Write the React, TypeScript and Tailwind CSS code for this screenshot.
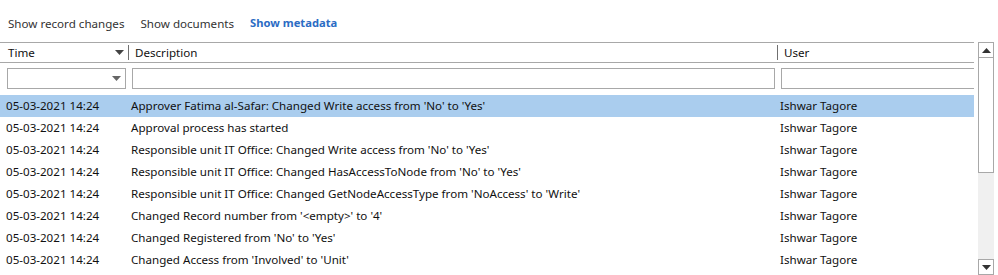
import { useState } from "react";

const rows = [
  "Approver Fatima al-Safar: Changed Write access from 'No' to 'Yes'",
  "Approval process has started",
  "Responsible unit IT Office: Changed Write access from 'No' to 'Yes'",
  "Responsible unit IT Office: Changed HasAccessToNode from 'No' to 'Yes'",
  "Responsible unit IT Office: Changed GetNodeAccessType from 'NoAccess' to 'Write'",
  "Changed Record number from '<empty>' to '4'",
  "Changed Registered from 'No' to 'Yes'",
  "Changed Access from 'Involved' to 'Unit'",
];

function Caret({ up = false, className = "" }: { up?: boolean; className?: string }) {
  return (
    <svg width="9" height="5" viewBox="0 0 9 5" className={className}>
      <path d={up ? "M0 5 L4.5 0 L9 5 Z" : "M0 0 L9 0 L4.5 5 Z"} fill="currentColor" />
    </svg>
  );
}

export default function App() {
  const [tab, setTab] = useState(2);
  const tabs = ["Show record changes", "Show documents", "Show metadata"];

  return (
    <div className="relative h-[275px] w-[998px] overflow-hidden bg-white text-[11.6px] text-[#111]" style={{ fontFamily: "'Noto Sans', sans-serif" }}>
      <div className="flex h-[42px] items-center gap-[16px] pl-[8px] pt-[5px]">
        {tabs.map((t, i) => (
          <button key={t} onClick={() => setTab(i)} className={i === tab ? "text-[11.2px] font-bold text-[#2b6cc4]" : "text-[#333]"}>{t}</button>
        ))}
      </div>

      <div className="flex">
        <div className="w-[974px]">
          {/* header */}
          <div className="flex h-[21px] items-center border-y border-[#a8a8a8]">
            <div className="flex w-[128px] items-center justify-between pl-[8px] pr-[4px]">
              <span>Time</span>
              <Caret className="text-[#444]" />
            </div>
            <div className="h-[15px] w-px bg-[#707070]" />
            <div className="w-[648px] pl-[6px]">Description</div>
            <div className="h-[15px] w-px bg-[#707070]" />
            <div className="flex-1 pl-[6px]">User</div>
          </div>

          {/* filters */}
          <div className="flex h-[32px] items-start pt-[5px]">
            <div className="ml-[7px] flex h-[21px] w-[119px] items-center justify-end border border-[#a8a8a8] pr-[4px]">
              <Caret className="text-[#666]" />
            </div>
            <div className="ml-[6px] h-[21px] w-[643px] border border-[#a8a8a8]" />
            <div className="ml-[6px] h-[21px] flex-1 border border-r-0 border-[#a8a8a8]" />
          </div>

          {rows.map((d, i) => (
            <div key={i} className={`flex h-[22px] items-center ${i === 0 ? "bg-[#aacdee]" : ""}`}>
              <div className="w-[125px] pl-[6px]">05-03-2021 14:24</div>
              <div className="w-[649px] pl-[6px]">{d}</div>
              <div className="flex-1 pl-[6px]">Ishwar Tagore</div>
            </div>
          ))}
        </div>

        {/* scrollbar */}
        <div className="ml-[4px] flex h-[233px] w-[16px] flex-col bg-[#f0f0f0]">
          <div className="flex h-[16px] items-center justify-center border border-[#a8a8a8] bg-white text-[#333]">
            <Caret up />
          </div>
          <div className="h-[115px] border-x border-b border-[#a8a8a8] bg-white" />
          <div className="flex-1" />
          <div className="flex h-[16px] items-center justify-center border border-[#a8a8a8] bg-white text-[#333]">
            <Caret />
          </div>
        </div>
      </div>
    </div>
  );
}
